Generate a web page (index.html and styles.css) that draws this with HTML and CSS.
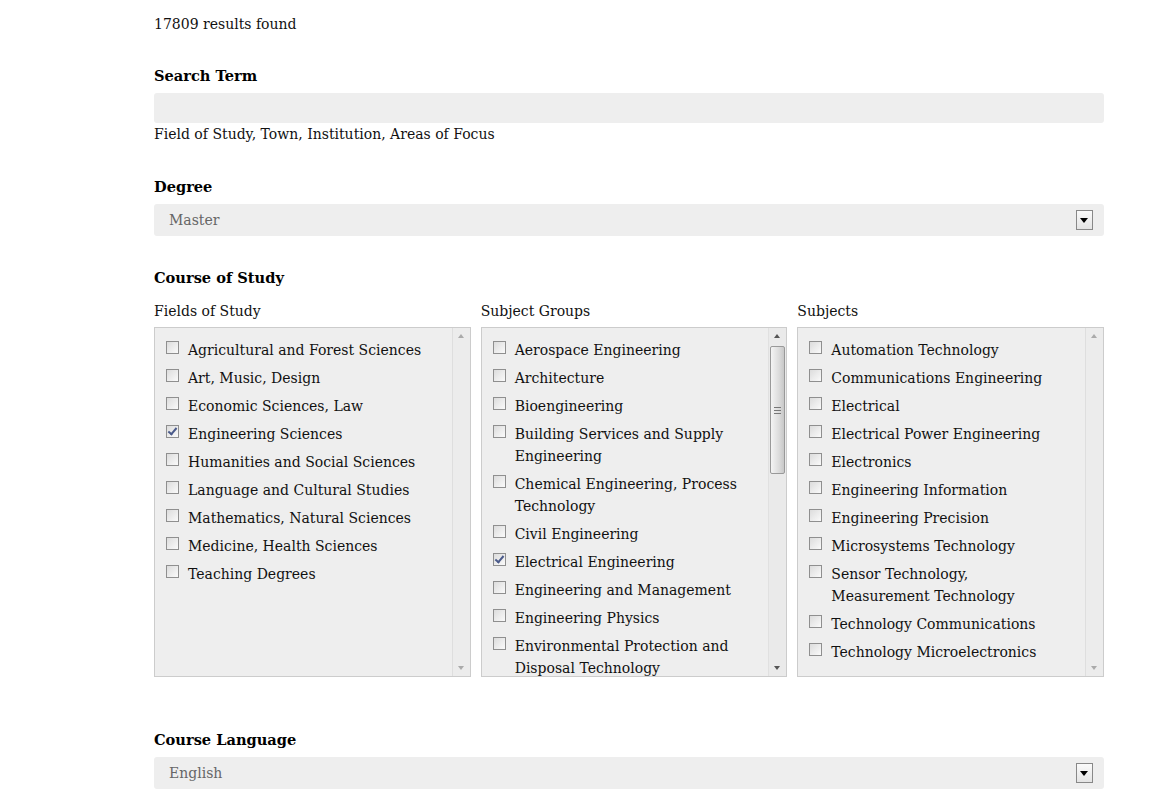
FILE: index.html
```html
<!DOCTYPE html>
<html lang="en">
<head>
    <meta charset="UTF-8">
    <title>Course Search</title>
    <link rel="stylesheet" href="styles.css">
</head>
<body>
<div class="page">
    <p class="results">17809 results found</p>

    <div class="field field-first">
        <h3 class="label">Search Term</h3>
        <div class="text-input"></div>
        <p class="hint">Field of Study, Town, Institution, Areas of Focus</p>
    </div>

    <div class="field">
        <h3 class="label">Degree</h3>
        <div class="select">
            <span class="select-value">Master</span>
            <span class="select-arrow"></span>
        </div>
    </div>

    <div class="field">
        <h3 class="label">Course of Study</h3>
        <div class="columns">
            <div class="column col-wide">
                <div class="col-title">Fields of Study</div>
                <div class="listbox">
                    <ul class="options">
                        <li><span class="check"></span><span>Agricultural and Forest Sciences</span></li>
                        <li><span class="check"></span><span>Art, Music, Design</span></li>
                        <li><span class="check"></span><span>Economic Sciences, Law</span></li>
                        <li><span class="check checked"></span><span>Engineering Sciences</span></li>
                        <li><span class="check"></span><span>Humanities and Social Sciences</span></li>
                        <li><span class="check"></span><span>Language and Cultural Studies</span></li>
                        <li><span class="check"></span><span>Mathematics, Natural Sciences</span></li>
                        <li><span class="check"></span><span>Medicine, Health Sciences</span></li>
                        <li><span class="check"></span><span>Teaching Degrees</span></li>
                    </ul>
                    <div class="scrollbar disabled">
                        <span class="arrow up"></span>
                        <span class="track"></span>
                        <span class="arrow down"></span>
                    </div>
                </div>
            </div>
            <div class="column">
                <div class="col-title">Subject Groups</div>
                <div class="listbox">
                    <ul class="options">
                        <li><span class="check"></span><span>Aerospace Engineering</span></li>
                        <li><span class="check"></span><span>Architecture</span></li>
                        <li><span class="check"></span><span>Bioengineering</span></li>
                        <li><span class="check"></span><span>Building Services and Supply Engineering</span></li>
                        <li><span class="check"></span><span>Chemical Engineering, Process Technology</span></li>
                        <li><span class="check"></span><span>Civil Engineering</span></li>
                        <li><span class="check checked"></span><span>Electrical Engineering</span></li>
                        <li><span class="check"></span><span>Engineering and Management</span></li>
                        <li><span class="check"></span><span>Engineering Physics</span></li>
                        <li><span class="check"></span><span>Environmental Protection and Disposal Technology</span></li>
                    </ul>
                    <div class="scrollbar">
                        <span class="arrow up"></span>
                        <span class="track"><span class="thumb"><span class="grip"></span></span></span>
                        <span class="arrow down"></span>
                    </div>
                </div>
            </div>
            <div class="column">
                <div class="col-title">Subjects</div>
                <div class="listbox">
                    <ul class="options">
                        <li><span class="check"></span><span>Automation Technology</span></li>
                        <li><span class="check"></span><span>Communications Engineering</span></li>
                        <li><span class="check"></span><span>Electrical</span></li>
                        <li><span class="check"></span><span>Electrical Power Engineering</span></li>
                        <li><span class="check"></span><span>Electronics</span></li>
                        <li><span class="check"></span><span>Engineering Information</span></li>
                        <li><span class="check"></span><span>Engineering Precision</span></li>
                        <li><span class="check"></span><span>Microsystems Technology</span></li>
                        <li><span class="check"></span><span>Sensor Technology, Measurement Technology</span></li>
                        <li><span class="check"></span><span>Technology Communications</span></li>
                        <li><span class="check"></span><span>Technology Microelectronics</span></li>
                    </ul>
                    <div class="scrollbar disabled">
                        <span class="arrow up"></span>
                        <span class="track"></span>
                        <span class="arrow down"></span>
                    </div>
                </div>
            </div>
        </div>
    </div>

    <div class="field field-language">
        <h3 class="label">Course Language</h3>
        <div class="select">
            <span class="select-value">English</span>
            <span class="select-arrow"></span>
        </div>
    </div>
</div>
</body>
</html>
```

FILE: styles.css
```css
body {
    margin: 0;
    background: #fff;
    color: #111;
    font-family: "DejaVu Serif", Georgia, serif;
    font-size: 14px;
    line-height: 22px;
}

.page {
    width: 950px;
    margin-left: 154px;
    padding-top: 13px;
}

.results {
    margin: 0;
}

.field {
    margin-top: 31px;
}

.field-first {
    margin-top: 30px;
}

.label {
    margin: 0 0 6px;
    font-size: 14.6px;
    line-height: 22px;
    font-weight: bold;
    color: #000;
}

.text-input {
    height: 30px;
    background: #eee;
    border-radius: 3px;
}

.hint {
    margin: 0;
}

.select {
    height: 32px;
    background: #eee;
    border-radius: 3px;
    display: flex;
    align-items: center;
    justify-content: space-between;
    padding: 0 11px 0 15px;
}

.select-value {
    color: #666;
}

.select-arrow {
    width: 15px;
    height: 18px;
    border: 1px solid #888;
    background: linear-gradient(#fafafa, #e4e4e4);
    position: relative;
}

.select-arrow::after {
    content: "";
    position: absolute;
    left: 3px;
    top: 7px;
    border-left: 4.5px solid transparent;
    border-right: 4.5px solid transparent;
    border-top: 5px solid #000;
}

/* columnas de la seccion de estudios */
.columns {
    display: flex;
    gap: 10px;
    margin-top: 11px;
}

.column {
    width: 307px;
}

.col-wide {
    width: 317px;
}

.col-title {
    margin-bottom: 5px;
}

.listbox {
    height: 348px;
    border: 1px solid #ccc;
    background: #eee;
    display: flex;
}

.options {
    flex: 1;
    list-style: none;
    margin: 0;
    padding: 11px 20px 0 11px;
    overflow: hidden;
}

.options li {
    display: flex;
    align-items: flex-start;
    margin-bottom: 6px;
}

.check {
    flex: none;
    width: 11px;
    height: 11px;
    margin: 2px 9px 0 0;
    border: 1px solid #8f8f8f;
    background: linear-gradient(135deg, #dcdcdc, #fafafa);
    position: relative;
}

.checked::after {
    content: "";
    position: absolute;
    left: 3px;
    top: 0px;
    width: 3px;
    height: 7px;
    border: solid #4a5a8a;
    border-width: 0 2px 2px 0;
    transform: rotate(40deg);
}

/* barra de desplazamiento dibujada a mano */
.scrollbar {
    flex: none;
    width: 17px;
    display: flex;
    flex-direction: column;
    background: #eaeaea;
    border-left: 1px solid #e0e0e0;
}

.scrollbar.disabled {
    background: #ececec;
    border-left: 1px solid #dedede;
}

.arrow {
    height: 16px;
    position: relative;
}

.arrow::after {
    content: "";
    position: absolute;
    left: 5px;
    border-left: 3.5px solid transparent;
    border-right: 3.5px solid transparent;
}

.arrow.up::after {
    top: 6px;
    border-bottom: 4px solid #555;
}

.arrow.down::after {
    top: 6px;
    border-top: 4px solid #555;
}

.disabled .arrow.up::after {
    border-bottom-color: #aaa;
}

.disabled .arrow.down::after {
    border-top-color: #aaa;
}

.track {
    flex: 1;
    display: block;
    padding: 2px 1px 0;
}

.thumb {
    display: flex;
    align-items: center;
    justify-content: center;
    height: 126px;
    border: 1px solid #999;
    border-radius: 2px;
    background: linear-gradient(90deg, #f4f4f4, #dcdcdc 60%, #c8c8c8);
}

.grip {
    width: 7px;
    height: 5px;
    border-top: 1px solid #777;
    border-bottom: 1px solid #777;
    position: relative;
}

.grip::after {
    content: "";
    position: absolute;
    left: 0;
    right: 0;
    top: 2px;
    border-top: 1px solid #777;
}

.field-language {
    margin-top: 52px;
}
```
